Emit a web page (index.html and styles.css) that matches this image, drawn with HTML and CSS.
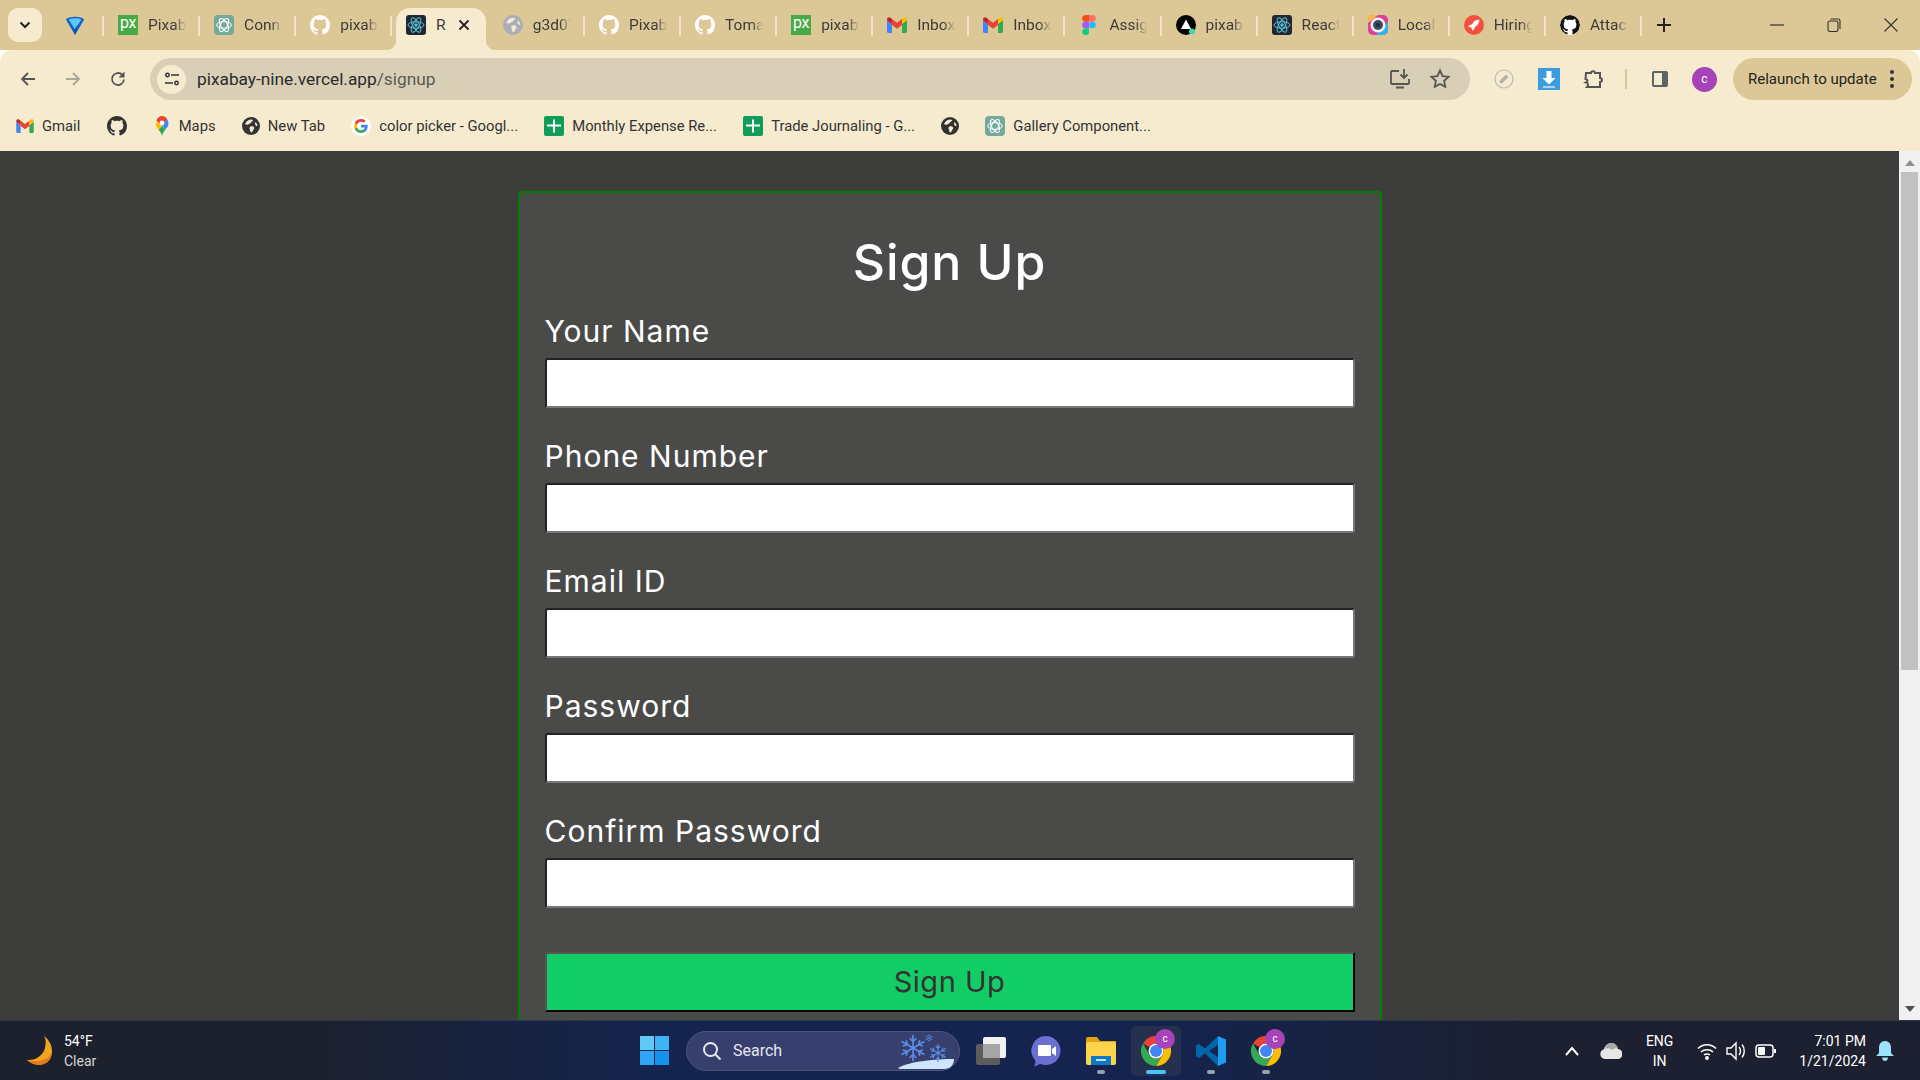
FILE: index.html
```html
<!DOCTYPE html>
<html lang="en">
<head>
    <meta charset="UTF-8">
    <title>Sign Up</title>
    <link rel="stylesheet" href="styles.css">
</head>
<body>
    <svg class="defs" xmlns="http://www.w3.org/2000/svg">
        <symbol id="i-github" viewBox="0 0 16 16"><path d="M8 0C3.58 0 0 3.58 0 8c0 3.54 2.29 6.53 5.47 7.59.4.07.55-.17.55-.38 0-.19-.01-.82-.01-1.49-2.01.37-2.53-.49-2.69-.94-.09-.23-.48-.94-.82-1.13-.28-.15-.68-.52-.01-.53.63-.01 1.08.58 1.23.82.72 1.21 1.87.87 2.33.66.07-.52.28-.87.51-1.07-1.78-.2-3.64-.89-3.64-3.95 0-.87.31-1.59.82-2.15-.08-.2-.36-1.02.08-2.12 0 0 .67-.21 2.2.82.64-.18 1.32-.27 2-.27.68 0 1.36.09 2 .27 1.53-1.04 2.2-.82 2.2-.82.44 1.1.16 1.92.08 2.12.51.56.82 1.27.82 2.15 0 3.07-1.87 3.75-3.65 3.95.29.25.54.73.54 1.48 0 1.07-.01 1.93-.01 2.2 0 .21.15.46.55.38A8.013 8.013 0 0016 8c0-4.42-3.58-8-8-8z"/></symbol>
        <symbol id="i-pixabay" viewBox="0 0 20 20"><rect width="20" height="20" fill="#48a947"/><text x="10" y="13" text-anchor="middle" font-family="Roboto, sans-serif" font-size="16" letter-spacing="-0.5" fill="#fff">px</text></symbol>
        <symbol id="i-gpt" viewBox="0 0 20 20"><rect width="20" height="20" rx="4" fill="#74aa9c"/><g fill="none" stroke="#fff" stroke-width="1"><ellipse cx="10" cy="10" rx="7.200" ry="3.400"/><ellipse cx="10" cy="10" rx="7.200" ry="3.400" transform="rotate(60 10 10)"/><ellipse cx="10" cy="10" rx="7.200" ry="3.400" transform="rotate(120 10 10)"/></g></symbol>
        <symbol id="i-react" viewBox="0 0 20 20"><rect width="20" height="20" rx="3" fill="#23272f"/><g fill="none" stroke="#58c4dc" stroke-width="1"><ellipse cx="10" cy="10" rx="8" ry="3.200"/><ellipse cx="10" cy="10" rx="8" ry="3.200" transform="rotate(60 10 10)"/><ellipse cx="10" cy="10" rx="8" ry="3.200" transform="rotate(120 10 10)"/></g><circle cx="10" cy="10" r="1.700" fill="#58c4dc"/></symbol>
        <symbol id="i-gmail" viewBox="0 0 20 16"><path fill="#4285f4" d="M0 3v11.500c0 .8.6 1.500 1.400 1.500H5V7z"/><path fill="#34a853" d="M15 7v9h3.600c.8 0 1.400-.7 1.400-1.500V3z"/><path fill="#ea4335" d="M5 8V2l5 3.800L15 2v6l-5 3.800z"/><path fill="#c5221f" d="M0 3.200 5 7V2L3.200.7C1.900-.3 0 .6 0 2.200z"/><path fill="#fbbc04" d="M15 2v5l5-3.800V2.200c0-1.600-1.900-2.500-3.200-1.500z"/></symbol>
        <symbol id="i-figma" viewBox="0 0 20 20"><g transform="translate(3)"><path fill="#f24e1e" d="M3.500 0H7v6.700H3.500a3.350 3.350 0 0 1 0-6.700z"/><path fill="#ff7262" d="M7 0h3.500a3.350 3.350 0 0 1 0 6.700H7z"/><path fill="#a259ff" d="M3.500 6.700H7v6.600H3.500a3.300 3.300 0 0 1 0-6.600z"/><circle cx="10.400" cy="10" r="3.300" fill="#1abcfe"/><path fill="#0acf83" d="M3.500 13.300H7v3.300a3.350 3.350 0 1 1-3.500-3.300z"/></g></symbol>
        <symbol id="i-sail" viewBox="0 0 20 20"><circle cx="10" cy="10" r="10" fill="#000"/><path fill="#fff" d="M10 4.500 15 14H5z"/><circle cx="16" cy="16.500" r="3" fill="#3fd9b4"/></symbol>
        <symbol id="i-local" viewBox="0 0 20 20"><rect width="20" height="20" rx="5" fill="#e0409a"/><path fill="#2fb6f0" d="M20 7v8a5 5 0 0 1-5 5H8z"/><path fill="#f6c03c" d="M0 8V5a5 5 0 0 1 5-5h5z"/><circle cx="10" cy="10" r="7.500" fill="#f3f3f3"/><circle cx="10" cy="10" r="5" fill="#3d4c63"/><circle cx="10" cy="10" r="2" fill="#1d2a3d"/></symbol>
        <symbol id="i-rocket" viewBox="0 0 20 20"><circle cx="10" cy="10" r="10" fill="#f4503f"/><path fill="#fff" d="M15.500 4.500c-3.500.2-6 1.800-7.700 5L6 9.700 4.200 12l2.600.3 1 1 .3 2.500 2.200-1.800.3-1.800c3-1.800 4.600-4.300 4.900-7.700z"/></symbol>
        <symbol id="i-globe" viewBox="0 0 20 20"><circle cx="10" cy="10" r="10"/><path fill="#f7ebcf" d="M7 3.500c2-1 4.500-1 5.500 0-.5 1.500-2 1-2.500 2.500-.5 1.300-2 1.200-3 2.200-1 .9-2.700.1-3.800-.5C4.300 6 5.500 4.300 7 3.500zM9.500 10.500c1.500-.6 3.500 0 4 1.200.5 1.300-.7 2-1.200 3-.5 1.200-1 2.600-2.300 2.500-1-.7-.7-2.200-1.300-3.200-.6-1.200-.5-3 .8-3.500zM15 5.500c1 .8 2.200 2.600 2.300 4.300-1 .4-2-.3-2.600-1.300-.4-.8-.2-2.200.3-3z"/></symbol>
        <symbol id="i-google" viewBox="0 0 24 24"><circle cx="12" cy="12" r="12" fill="#fff"/><path fill="#4285f4" d="M20 12.200c0-.6-.05-1.100-.15-1.600H12v3.100h4.500c-.2 1-.8 1.900-1.700 2.500v2h2.700c1.600-1.500 2.500-3.600 2.500-6z"/><path fill="#34a853" d="M12 20.300c2.200 0 4.100-.7 5.500-2l-2.700-2c-.7.500-1.700.8-2.800.8-2.100 0-3.900-1.400-4.600-3.400H4.600v2.100c1.400 2.700 4.200 4.500 7.400 4.500z"/><path fill="#fbbc05" d="M7.400 13.700c-.35-1-.35-2.300 0-3.400V8.200H4.600c-1 2-1 5.500 0 7.600z"/><path fill="#ea4335" d="M12 6.900c1.200 0 2.300.4 3.200 1.200l2.400-2.400C16.100 4.400 14.200 3.700 12 3.700c-3.200 0-6 1.800-7.400 4.500l2.800 2.100c.7-2 2.500-3.400 4.600-3.400z"/></symbol>
        <symbol id="i-sheets" viewBox="0 0 20 20"><rect width="20" height="20" rx="2" fill="#0f9d58"/><path fill="#fff" d="M9 3.500h2v5h6v2h-6v6H9v-6H3v-2h6z"/></symbol>
        <symbol id="i-maps" viewBox="0 0 14 20"><path fill="#34a853" d="M7 20c-.6-3-2-4.700-3.500-6.600L7 10l3.500 3.400C9 15.300 7.600 17 7 20z"/><path fill="#fbbc04" d="M1 10c.6 1.300 1.500 2.300 2.500 3.400L8 8 4 4.200 1 7z"/><path fill="#4285f4" d="M13 10c-.6 1.300-1.500 2.300-2.500 3.400L7 9.500l5-6.500c1.300 1.700 2 4.500 1 7z"/><path fill="#ea4335" d="M12.200 3.200 7 9 1.400 4.400C2.500 1.800 4.600 0 7 0c2 0 4 1.200 5.200 3.200z"/><circle cx="7" cy="7" r="2.400" fill="#fff"/></symbol>
        <symbol id="i-gem" viewBox="0 0 20 22"><path fill="#0f62c4" d="M0 5C3 1 17 1 20 5L10 22z"/><path fill="#5cc6f7" d="M3 5c3-2 11-2 14 0l-7 11z"/><path fill="#0b3e94" d="M10 16 13 10l-3 12z"/></symbol>
        <symbol id="i-chrome" viewBox="0 0 30 30"><path fill="#ea4335" d="M2 7.500A15 15 0 0 1 28 7.500H15a7.500 7.500 0 0 0-6.500 3.750z"/><path fill="#fbbc04" d="M28 7.500A15 15 0 0 1 15 30l6.500-11.250A7.500 7.500 0 0 0 15 7.500z"/><path fill="#34a853" d="M15 30A15 15 0 0 1 2 7.500l6.500 11.250a7.500 7.500 0 0 0 13 0z"/><circle cx="15" cy="15" r="7.500" fill="#fff"/><circle cx="15" cy="15" r="6" fill="#4285f4"/></symbol>
        <symbol id="i-flake" viewBox="0 0 24 24"><g fill="none" stroke="#5d8fe8" stroke-width="1.500"><path d="M12 0v24M9 3l3 3 3-3M9 21l3-3 3 3"/><path d="M12 0v24M9 3l3 3 3-3M9 21l3-3 3 3" transform="rotate(60 12 12)"/><path d="M12 0v24M9 3l3 3 3-3M9 21l3-3 3 3" transform="rotate(120 12 12)"/></g></symbol>
    </svg>

    <div class="browser">
        <div class="tabstrip">
            <button class="tab-search">
                <svg width="14" height="14" viewBox="0 0 14 14"><path d="M2.500 4.500 7 9l4.500-4.500" fill="none" stroke="#222" stroke-width="2"/></svg>
            </button>
            <div class="tab tab-pinned"><svg class="fav" width="20" height="22"><use href="#i-gem"/></svg></div>
            <div class="tab"><svg class="fav"><use href="#i-pixabay"/></svg><span class="tab-title">Pixaba</span></div>
            <div class="tab"><svg class="fav"><use href="#i-gpt"/></svg><span class="tab-title">Conne</span></div>
            <div class="tab"><svg class="fav fav-white"><use href="#i-github"/></svg><span class="tab-title">pixaba</span></div>
            <div class="tab tab-active">
                <svg class="fav"><use href="#i-react"/></svg>
                <span class="tab-title">R</span>
                <svg class="tab-close" width="12" height="12" viewBox="0 0 12 12"><path d="M1.500 1.500l9 9m0-9l-9 9" stroke="#222" stroke-width="1.800"/></svg>
            </div>
            <div class="tab"><svg class="fav fav-grey"><use href="#i-globe"/></svg><span class="tab-title">g3d07</span></div>
            <div class="tab"><svg class="fav fav-white"><use href="#i-github"/></svg><span class="tab-title">Pixaba</span></div>
            <div class="tab"><svg class="fav fav-white"><use href="#i-github"/></svg><span class="tab-title">Tomat</span></div>
            <div class="tab"><svg class="fav"><use href="#i-pixabay"/></svg><span class="tab-title">pixaba</span></div>
            <div class="tab"><svg class="fav"><use href="#i-gmail"/></svg><span class="tab-title">Inbox</span></div>
            <div class="tab"><svg class="fav"><use href="#i-gmail"/></svg><span class="tab-title">Inbox</span></div>
            <div class="tab"><svg class="fav"><use href="#i-figma"/></svg><span class="tab-title">Assign</span></div>
            <div class="tab"><svg class="fav"><use href="#i-sail"/></svg><span class="tab-title">pixaba</span></div>
            <div class="tab"><svg class="fav"><use href="#i-react"/></svg><span class="tab-title">React</span></div>
            <div class="tab"><svg class="fav"><use href="#i-local"/></svg><span class="tab-title">Local</span></div>
            <div class="tab"><svg class="fav"><use href="#i-rocket"/></svg><span class="tab-title">Hiring</span></div>
            <div class="tab"><svg class="fav fav-black"><use href="#i-github"/></svg><span class="tab-title">Attach</span></div>
            <svg class="new-tab" width="14" height="14" viewBox="0 0 14 14"><path d="M7 0v14M0 7h14" stroke="#222" stroke-width="2"/></svg>
            <div class="win-controls">
                <svg width="14" height="14" viewBox="0 0 14 14"><path d="M0 7h14" stroke="#333" stroke-width="1.200"/></svg>
                <svg width="14" height="14" viewBox="0 0 14 14" fill="none" stroke="#333" stroke-width="1.100"><rect x="1" y="3" width="10" height="10.500" rx="2"/><path d="M3.500 1H11a2 2 0 0 1 2 2v8"/></svg>
                <svg width="14" height="14" viewBox="0 0 14 14"><path d="M.5.500l13 13m0-13l-13 13" stroke="#333" stroke-width="1.100"/></svg>
            </div>
        </div>

        <div class="toolbar">
            <button class="tool-btn">
                <svg width="18" height="18" viewBox="0 0 18 18" fill="none" stroke="#555" stroke-width="1.800"><path d="M16 9H3M9 3 3 9l6 6"/></svg>
            </button>
            <button class="tool-btn">
                <svg width="18" height="18" viewBox="0 0 18 18" fill="none" stroke="#aaa69a" stroke-width="1.800"><path d="M2 9h13M9 3l6 6-6 6"/></svg>
            </button>
            <button class="tool-btn">
                <svg width="18" height="18" viewBox="0 0 18 18" fill="none" stroke="#555" stroke-width="1.800"><path d="M15 9.500A6 6 0 1 1 13 4.500"/><path fill="#555" stroke="none" d="M15.500 1.500v6h-6z"/></svg>
            </button>
            <div class="address">
                <span class="site-info">
                    <svg width="16" height="16" viewBox="0 0 16 16" fill="none" stroke="#333" stroke-width="1.500"><circle cx="3.500" cy="4" r="1.700"/><path d="M7 4h8M1 12h8"/><circle cx="12.500" cy="12" r="1.700"/></svg>
                </span>
                <span class="url">pixabay-nine.vercel.app<span class="url-path">/signup</span></span>
                <span class="address-icons">
                    <svg width="22" height="22" viewBox="0 0 22 22" fill="none" stroke="#555" stroke-width="1.800"><path d="M10 3H3a1 1 0 0 0-1 1v11a1 1 0 0 0 1 1h16a1 1 0 0 0 1-1v-4M7 19.500h8"/><path d="M15 1v9m-3.500-3.500L15 10l3.500-3.500"/></svg>
                    <svg width="22" height="22" viewBox="0 0 22 22" fill="none" stroke="#555" stroke-width="1.800"><path d="m11 2.500 2.600 5.600 6 .7-4.500 4.100 1.200 6L11 16l-5.300 2.900 1.200-6-4.500-4.100 6-.7z"/></svg>
                </span>
            </div>
            <div class="ext-icons">
                <button class="tool-btn">
                    <svg width="20" height="20" viewBox="0 0 20 20" fill="none"><circle cx="10" cy="10" r="9" stroke="#bdbab0" stroke-width="1.200"/><path d="m6 14-.5-2L12 5.500 14.500 8 8 14.500z" fill="#b4b1a8"/></svg>
                </button>
                <button class="tool-btn">
                    <svg width="22" height="22" viewBox="0 0 22 22"><rect width="22" height="22" fill="#3d9be0"/><path fill="#fff" d="M8.500 3h5v7h4L11 16.500 4.500 10h4z"/><rect x="5" y="18" width="12" height="2" fill="#a8d4f2"/></svg>
                </button>
                <button class="tool-btn">
                    <svg width="22" height="22" viewBox="0 0 22 22" fill="none" stroke="#555" stroke-width="2"><path d="M3 5h5c0-2.500 4-2.500 4 0h5v5c2.500 0 2.500 4 0 4v5H4c1.500-2 1.500-4-1-4.500 2-1 2-3-.5-3.500z"/></svg>
                </button>
                <span class="tool-sep"></span>
                <button class="tool-btn">
                    <svg width="18" height="18" viewBox="0 0 18 18"><rect x="1" y="1" width="16" height="16" rx="2" fill="#5f6368"/><rect x="3" y="3" width="8" height="12" fill="#f7ebcf"/></svg>
                </button>
                <span class="avatar">c</span>
            </div>
            <div class="relaunch">
                <span>Relaunch to update</span>
                <svg width="4" height="18" viewBox="0 0 4 18" fill="#333"><circle cx="2" cy="2" r="2"/><circle cx="2" cy="9" r="2"/><circle cx="2" cy="16" r="2"/></svg>
            </div>
        </div>

        <div class="bookmarks">
            <a class="bookmark"><svg width="18" height="14"><use href="#i-gmail"/></svg>Gmail</a>
            <a class="bookmark"><svg class="fav-dark" width="20" height="20"><use href="#i-github"/></svg></a>
            <a class="bookmark"><svg class="pin" width="14" height="20"><use href="#i-maps"/></svg>Maps</a>
            <a class="bookmark"><svg class="fav-dark" width="18" height="18"><use href="#i-globe"/></svg>New Tab</a>
            <a class="bookmark"><svg width="20" height="20"><use href="#i-google"/></svg>color picker - Googl...</a>
            <a class="bookmark"><svg width="20" height="20"><use href="#i-sheets"/></svg>Monthly Expense Re...</a>
            <a class="bookmark"><svg width="20" height="20"><use href="#i-sheets"/></svg>Trade Journaling - G...</a>
            <a class="bookmark"><svg class="fav-dark" width="18" height="18"><use href="#i-globe"/></svg></a>
            <a class="bookmark"><svg width="20" height="20"><use href="#i-gpt"/></svg>Gallery Component...</a>
        </div>

        <div class="page">
            <main class="content">
                <form class="card">
                    <h1>Sign Up</h1>
                    <div class="field"><label for="name">Your Name</label><input id="name" type="text"></div>
                    <div class="field"><label for="phone">Phone Number</label><input id="phone" type="text"></div>
                    <div class="field"><label for="email">Email ID</label><input id="email" type="text"></div>
                    <div class="field"><label for="pass">Password</label><input id="pass" type="password"></div>
                    <div class="field"><label for="confirm">Confirm Password</label><input id="confirm" type="password"></div>
                    <button class="submit" type="button">Sign Up</button>
                </form>
            </main>
            <div class="scrollbar">
                <span class="arrow-up"></span>
                <span class="thumb"></span>
                <span class="arrow-down"></span>
            </div>
        </div>

        <footer class="taskbar">
            <div class="weather">
                <svg width="28" height="30" viewBox="0 0 28 30"><path fill="#f2a51f" d="M18 0c8 6 10 16 6 23-4 7-16 8-23 1 9 1 16-5 18-12 1-5 1-9-1-12z"/><path fill="#e8791a" d="M1 24c7 7 19 6 23-1 1-2 1-3 1.500-5C20 25 10 27 1 24z"/></svg>
                <div class="two-lines">
                    <span>54°F</span>
                    <span class="dim">Clear</span>
                </div>
            </div>
            <svg class="win-logo" width="29" height="29" viewBox="0 0 29 29">
                <rect width="14" height="14" fill="#5fc9f8"/><rect x="15" width="14" height="14" fill="#3fb4f5"/><rect y="15" width="14" height="14" fill="#2fa5f3"/><rect x="15" y="15" width="14" height="14" fill="#1492ee"/>
            </svg>
            <div class="search">
                <svg width="20" height="20" viewBox="0 0 20 20" fill="none" stroke="#e6e8f0" stroke-width="2"><circle cx="8.500" cy="8.500" r="6.500"/><path d="m13 13 5.500 5.500"/></svg>
                <span>Search</span>
                <svg class="snow" width="56" height="38" viewBox="0 0 56 38">
                    <path d="M0 36c12-7 38-9 56-9 0 6-4 10-10 10H6c-3 0-5 0-6-1z" fill="#cfe6fa"/>
                    <use href="#i-flake" x="2" y="3" width="26" height="26"/>
                    <use href="#i-flake" x="31" y="12" width="18" height="18"/>
                    <use href="#i-flake" x="27" y="2" width="8" height="8"/>
                </svg>
            </div>
            <div class="task-apps">
                <div class="app">
                    <svg width="30" height="28" viewBox="0 0 30 28"><rect y="7" width="24" height="21" rx="2" fill="#5c5c5c"/><rect x="7" width="23" height="21" rx="2" fill="#f1f1f1"/><rect x="7" y="7" width="17" height="14" fill="#a5a5a5"/></svg>
                </div>
                <div class="app">
                    <svg width="30" height="30" viewBox="0 0 30 30"><path fill="#6a6fd0" d="M15 0a14.500 14.500 0 1 1-6 27.700C7 29.500 5 30 3 30c1.500-2 1.700-4 1-6A14.500 14.500 0 0 1 15 0z"/><path fill="#fff" d="M8 9h11a1 1 0 0 1 1 1v9a1 1 0 0 1-1 1H8a1 1 0 0 1-1-1v-9a1 1 0 0 1 1-1zM21 13l4-3v10l-4-3z"/></svg>
                </div>
                <div class="app">
                    <svg width="30" height="28" viewBox="0 0 30 28"><path fill="#e0a213" d="M0 2a2 2 0 0 1 2-2h9l3 4h16v6H0z"/><rect y="5" width="30" height="23" rx="2" fill="#fcd34d"/><rect x="5" y="19" width="20" height="9" fill="#0f7ac4"/><rect x="10" y="22" width="10" height="2" fill="#bfe3f7"/></svg>
                    <span class="app-dot"></span>
                </div>
                <div class="app app-active">
                    <svg width="30" height="30"><use href="#i-chrome"/></svg>
                    <span class="app-badge">c</span>
                    <span class="app-bar"></span>
                </div>
                <div class="app">
                    <svg width="30" height="30" viewBox="0 0 30 30"><path fill="#0065a9" d="M22 0 9 12.500 3 8 0 9.500v11L3 22l6-4.500L22 30v-9l-9-6 9-6z"/><path fill="#1f9cf0" d="m22 0 8 3.500v23L22 30z"/></svg>
                    <span class="app-dot"></span>
                </div>
                <div class="app">
                    <svg width="30" height="30"><use href="#i-chrome"/></svg>
                    <span class="app-badge">c</span>
                    <span class="app-dot"></span>
                </div>
            </div>
            <div class="tray">
                <svg class="tray-chevron" width="14" height="10" viewBox="0 0 14 10" fill="none" stroke="#fff" stroke-width="2"><path d="m1 9 6-7 6 7"/></svg>
                <svg class="tray-cloud" width="22" height="16" viewBox="0 0 22 16"><path fill="#e6e6e6" d="M5 16a5 5 0 0 1-1-9.800C5 2.500 8 0 11 0c4 0 6.500 3 7 6a5 5 0 0 1-1 10z"/><path fill="#a8a8a8" d="M11 0c4 0 6.500 3 7 6-3-1-5 0-6 1-2-2-5-2-7-1C6 2.500 8 0 11 0z"/></svg>
                <div class="two-lines lang"><span>ENG</span><span>IN</span></div>
                <svg class="tray-icon" width="20" height="20" viewBox="0 0 20 20" fill="none" stroke="#fff" stroke-width="1.500"><path d="M1 7.500c5-5 13-5 18 0M4 11c3-3 9-3 12 0M7 14c1.500-1.500 4.500-1.500 6 0"/><circle cx="10" cy="17" r="1.200" fill="#fff"/></svg>
                <svg class="tray-icon" width="22" height="20" viewBox="0 0 22 20" fill="none" stroke="#fff" stroke-width="1.400"><path d="M2 7h4l5-5v16l-5-5H2z"/><path d="M14 6c2 2 2 6 0 8M17 3.500c3 3.500 3 9.500 0 13"/></svg>
                <svg class="tray-icon" width="22" height="14" viewBox="0 0 22 14"><rect x="1" y="1" width="17" height="12" rx="3" fill="none" stroke="#fff" stroke-width="1.500"/><rect x="3" y="3" width="7" height="8" rx="1" fill="#fff"/><rect x="19" y="5" width="2" height="4" fill="#fff"/></svg>
                <div class="two-lines clock"><span>7:01 PM</span><span>1/21/2024</span></div>
                <svg class="tray-bell" width="18" height="20" viewBox="0 0 18 20"><path fill="#9be3fb" d="M9 0c4 0 6 3 6 7v5l3 3H0l3-3V7c0-4 2-7 6-7zM6 16.500h6c0 2-1.300 3.500-3 3.500s-3-1.500-3-3.500z"/></svg>
            </div>
        </footer>
    </div>
</body>
</html>
```

FILE: styles.css
```css
* {
    box-sizing: border-box;
}
body {
    margin: 0;
    font-family: Roboto, "Liberation Sans", sans-serif;
    color: #333;
}
.defs {
    display: block;
    width: 0;
    height: 0;
}
button {
    padding: 0;
    border: none;
    background: none;
    font-family: inherit;
}
.browser {
    display: flex;
    flex-direction: column;
    height: 1080px;
    overflow: hidden;
}

/* Tabs */
.tabstrip {
    display: flex;
    align-items: center;
    height: 50px;
    flex: none;
    padding: 0 0 0 8px;
    background-color: #dcc896;
}
.tab-search {
    display: flex;
    align-items: center;
    justify-content: center;
    width: 34px;
    height: 34px;
    margin-right: 9px;
    border-radius: 10px;
    background-color: #f7ebcf;
}
.tab {
    position: relative;
    display: flex;
    align-items: center;
    flex: none;
    width: 96.1px;
    height: 42px;
    margin-top: 8px;
    padding: 0 0 8px 14px;
}
.tab::after {
    content: "";
    position: absolute;
    right: 0;
    top: 8px;
    width: 2px;
    height: 20px;
    background-color: #f3e5c4;
}
.tab-pinned {
    width: 53px;
}
.fav {
    flex: none;
    width: 20px;
    height: 20px;
}
.fav-white {
    fill: #fff;
}
.fav-black {
    background: #fff;
    border-radius: 50%;
    fill: #111;
}
.fav-grey {
    fill: #a9aeb8;
}
.fav-dark {
    fill: #333;
}
.tab-title {
    width: 38px;
    margin-left: 10px;
    overflow: hidden;
    white-space: nowrap;
    font-size: 15.5px;
    color: #3c3c3c;
    -webkit-mask-image: linear-gradient(to right, #000 70%, transparent);
    mask-image: linear-gradient(to right, #000 70%, transparent);
}
.tab-active {
    width: 90px;
    margin-left: 3.7px;
    margin-right: 2.9px;
    padding-left: 10px;
    border-radius: 14px 14px 0 0;
    background-color: #f7ebcf;
}
.tab-active::before, .tab-active::after {
    content: "";
    position: absolute;
    top: auto;
    bottom: 0;
    width: 10px;
    height: 10px;
}
.tab-active::before {
    left: -10px;
    background: radial-gradient(circle at 0 0, transparent 10px, #f7ebcf 10.5px);
}
.tab-active::after {
    right: -10px;
    background: radial-gradient(circle at 100% 0, transparent 10px, #f7ebcf 10.5px);
}
.tab-active .tab-title {
    width: 14px;
    -webkit-mask-image: none;
    mask-image: none;
}
.tab-close {
    margin-left: 8px;
}
.new-tab {
    flex: none;
    margin-left: 15px;
}
.win-controls {
    display: flex;
    align-items: center;
    gap: 43px;
    margin-left: auto;
    padding-right: 22px;
}

/* Toolbar */
.toolbar {
    display: flex;
    align-items: flex-start;
    flex: none;
    height: 50px;
    padding: 8px 8px 0 5px;
    border-radius: 12px 12px 0 0;
    background-color: #f7ebcf;
}
.tool-btn {
    display: flex;
    align-items: center;
    justify-content: center;
    flex: none;
    width: 45px;
    height: 42px;
}
.address {
    display: flex;
    align-items: center;
    flex: none;
    width: 1320px;
    height: 42px;
    margin-left: 10px;
    padding: 0 7px;
    border-radius: 21px;
    background-color: #d9ceb6;
}
.site-info {
    display: flex;
    align-items: center;
    justify-content: center;
    width: 29px;
    height: 29px;
    border-radius: 50%;
    background-color: #f7ebcf;
}
.url {
    margin-left: 11px;
    font-size: 17.3px;
    color: #2b2b2b;
}
.url-path {
    color: #5c5a52;
}
.address-icons {
    display: flex;
    align-items: center;
    gap: 18px;
    margin-left: auto;
    padding-right: 12px;
}
.ext-icons {
    display: flex;
    align-items: center;
    height: 42px;
    margin-left: 11px;
}
.tool-sep {
    width: 2px;
    height: 20px;
    margin: 0 10px 0 9px;
    background-color: #dcc896;
}
.avatar {
    display: flex;
    align-items: center;
    justify-content: center;
    width: 25px;
    height: 25px;
    margin: 0 16px 0 10px;
    border-radius: 50%;
    background-color: #a742b8;
    color: #fff;
    font-size: 12px;
}
.relaunch {
    display: flex;
    align-items: center;
    justify-content: space-between;
    flex: none;
    width: 179px;
    height: 42px;
    padding: 0 18px 0 15px;
    border-radius: 21px;
    background-color: #dcc896;
    font-size: 15px;
    color: #222;
    white-space: nowrap;
}

/* Bookmarks */
.bookmarks {
    display: flex;
    align-items: center;
    flex: none;
    height: 51px;
    padding-left: 3px;
    background-color: #f7ebcf;
}
.bookmark {
    display: flex;
    align-items: center;
    gap: 8px;
    padding: 0 13.2px 0 13px;
    font-size: 14.8px;
    color: #333;
    white-space: nowrap;
}
.pin {
    margin: 0 2px;
}

/* Page */
.page {
    display: flex;
    flex: 1;
    min-height: 0;
    overflow: hidden;
    background-color: #3d3d3b;
}
.content {
    flex: 1;
    padding-top: 40px;
}
.card {
    width: 864px;
    margin: 0 auto;
    padding: 0 25px;
    border: 2px solid #008000;
    border-radius: 4px;
    background-color: #4a4a48;
    color: #fff;
    font-family: Inter, "Open Sans", sans-serif;
}
.card h1 {
    margin: 0 0 15px;
    padding-top: 38px;
    font-size: 50px;
    line-height: 62px;
    font-weight: 500;
    letter-spacing: 0.9px;
    text-align: center;
}
.field {
    margin-bottom: 25px;
}
.field label {
    display: block;
    height: 50px;
    font-size: 30px;
    line-height: 46px;
    letter-spacing: 1px;
}
.field input {
    display: block;
    width: 100%;
    height: 50px;
    border: 2px solid;
    border-color: #222 #777 #777 #222;
    border-radius: 3px;
    background-color: #fff;
}
.submit {
    display: block;
    width: 100%;
    height: 60px;
    margin-top: 44px;
    margin-bottom: 40px;
    padding-bottom: 2px;
    border: 2px solid;
    border-color: #555 #000 #000 #555;
    background-color: #12cc66;
    color: #333;
    font-family: inherit;
    font-size: 29px;
    letter-spacing: 0.5px;
}
.scrollbar {
    display: flex;
    flex-direction: column;
    align-items: center;
    flex: none;
    width: 21px;
    padding: 9px 0 5px;
    background-color: #f1f1f1;
}
.arrow-up, .arrow-down {
    width: 0;
    height: 0;
    border-left: 5px solid transparent;
    border-right: 5px solid transparent;
}
.arrow-up {
    border-bottom: 6px solid #8f8f8f;
}
.arrow-down {
    margin-top: auto;
    margin-bottom: 3px;
    border-top: 6px solid #505050;
}
.thumb {
    width: 17px;
    height: 498px;
    margin-top: 6px;
    background-color: #c1c1c1;
}

/* Taskbar */
.taskbar {
    display: flex;
    align-items: center;
    flex: none;
    height: 60px;
    border-top: 1px solid #2c3650;
    background: linear-gradient(to right, #1c212d 0%, #1c212d 15%, #14244f 35%, #14244f 60%, #1c2030 80%);
    color: #fff;
    font-size: 14px;
}
.weather {
    display: flex;
    align-items: center;
    gap: 10px;
    flex: none;
    width: 640px;
    padding-left: 26px;
}
.two-lines {
    display: flex;
    flex-direction: column;
    line-height: 20px;
}
.dim {
    color: #d5d5d5;
}
.win-logo {
    flex: none;
}
.search {
    display: flex;
    align-items: center;
    flex: none;
    width: 274px;
    height: 40px;
    margin-left: 17px;
    padding: 0 5px 0 15px;
    border: 1px solid #4a5680;
    border-radius: 20px;
    background-color: #363f6e;
    color: #e6e8f0;
    font-size: 16px;
}
.search span {
    margin-left: 11px;
}
.snow {
    margin-left: auto;
}
.task-apps {
    display: flex;
    margin-left: 3px;
}
.app {
    position: relative;
    display: flex;
    align-items: center;
    justify-content: center;
    width: 55px;
    height: 50px;
}
.app-active {
    width: 50px;
    margin: 0 2px 0 3px;
    border-radius: 5px;
    background-color: #252f4e;
}
.app-dot {
    position: absolute;
    bottom: 2px;
    left: 23.5px;
    width: 8px;
    height: 4px;
    border-radius: 2px;
    background-color: #9aa0ab;
}
.app-bar {
    position: absolute;
    bottom: 2px;
    left: 15px;
    width: 20px;
    height: 4px;
    border-radius: 2px;
    background-color: #4cc2ff;
}
.app-badge {
    position: absolute;
    top: 3px;
    right: 6px;
    width: 20px;
    height: 20px;
    border-radius: 50%;
    background-color: #a742b8;
    font-size: 10px;
    line-height: 20px;
    text-align: center;
}
.app:not(.app-active) .app-badge {
    right: 8px;
}
.tray {
    display: flex;
    align-items: center;
    margin-left: auto;
    padding-right: 26px;
}
.tray-cloud {
    margin-left: 21px;
}
.lang {
    align-items: center;
    margin: 0 24px 0 24px;
}
.tray-icon {
    margin-right: 8px;
}
.clock {
    align-items: flex-end;
    margin-left: 14px;
}
.tray-bell {
    margin-left: 10px;
}
```
